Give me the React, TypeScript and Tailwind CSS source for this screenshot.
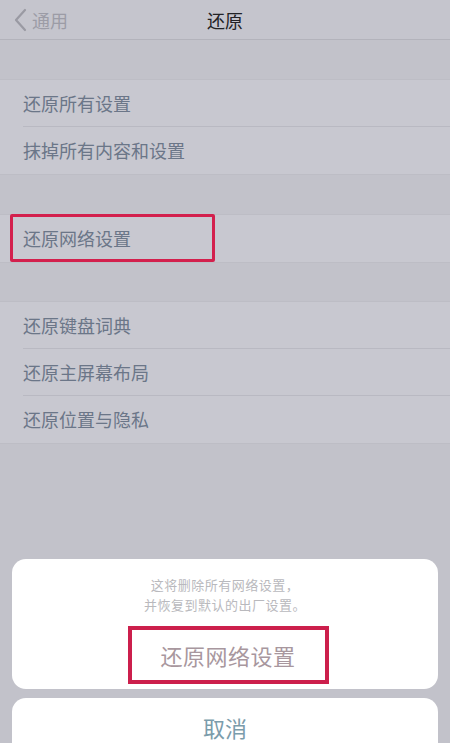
import React from "react";

const font = { fontFamily: '"Noto Sans CJK SC", "Noto Sans", sans-serif' };

function Row({ label, last }: { label: string; last?: boolean }) {
  return (
    <div className="h-[47px] flex items-center pl-[23px] pb-[2px] bg-[#c8c8d0] relative">
      <span className="text-[18px] leading-none text-[#6b7688]">{label}</span>
      {!last && <div className="absolute left-[23px] right-0 bottom-0 h-px bg-[#b9b9c2]" />}
    </div>
  );
}

export default function App() {
  return (
    <div className="w-[450px] h-[743px] bg-[#c2c2ca] overflow-hidden relative" style={font}>
      {/* Nav */}
      <div className="h-[40px] bg-[#c5c5cd] border-b border-[#b3b3bb] flex items-center relative">
        <div className="flex items-center pl-[13px] gap-[5px]">
          <svg width="14" height="24" viewBox="0 0 14 24">
            <path d="M12 2 L3 12 L12 22" stroke="#9a9aa3" strokeWidth="2.2" fill="none" strokeLinecap="round" strokeLinejoin="round" />
          </svg>
          <span className="text-[18px] leading-none text-[#9c9ca6]">通用</span>
        </div>
        <span className="absolute left-1/2 -translate-x-1/2 text-[18px] leading-none text-[#222226]">还原</span>
      </div>

      <div className="h-[39px]" />
      <div className="border-y border-[#bdbdc5]">
        <Row label="还原所有设置" />
        <Row label="抹掉所有内容和设置" last />
      </div>

      <div className="h-[39px]" />
      <div className="border-y border-[#bdbdc5] relative">
        <Row label="还原网络设置" last />
        <div className="absolute left-[10px] top-[-1px] w-[205px] h-[48px] border-[3px] border-[#d3204d] rounded-[2px]" />
      </div>

      <div className="h-[38px]" />
      <div className="border-y border-[#bdbdc5]">
        <Row label="还原键盘词典" />
        <Row label="还原主屏幕布局" />
        <Row label="还原位置与隐私" last />
      </div>

      {/* Action sheet */}
      <div className="absolute left-[12px] right-[12px] top-[559px] h-[130px] bg-white rounded-[14px] flex flex-col items-center">
        <div className="pt-[16px] text-[13px] leading-[20px] text-[#b9b9bd] text-center tracking-[0.5px]">
          <div>这将删除所有网络设置，</div>
          <div>并恢复到默认的出厂设置。</div>
        </div>
        <div className="mt-[11px] ml-[6px] w-[201px] h-[58px] border-[4px] border-[#cc1f4c] flex items-center justify-center">
          <span className="text-[22px] leading-none text-[#a8979e] tracking-[0.5px]">还原网络设置</span>
        </div>
      </div>
      <div className="absolute left-[12px] right-[12px] top-[698px] h-[70px] bg-white rounded-[14px] flex justify-center pt-[18px]">
        <span className="text-[22px] leading-none text-[#7b9cab]">取消</span>
      </div>
    </div>
  );
}
